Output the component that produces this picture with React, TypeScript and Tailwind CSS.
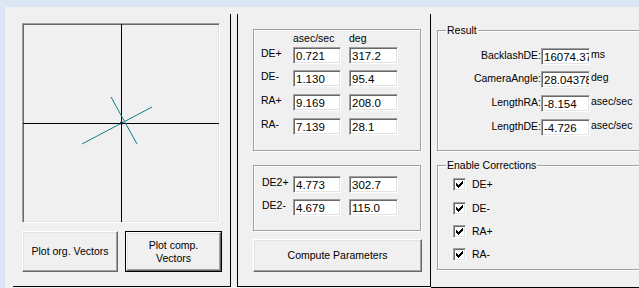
import React from "react";

const font = "font-['Liberation_Sans',Arial,sans-serif] text-[10.5px] text-black";

const sunken =
  "border border-t-[#a0a0a0] border-l-[#a0a0a0] border-b-white border-r-white shadow-[inset_1px_1px_0_#696969,inset_-1px_-1px_0_#e3e3e3]";

const raised =
  "border border-t-white border-l-white border-b-[#696969] border-r-[#696969] shadow-[inset_-1px_-1px_0_#a0a0a0,inset_1px_1px_0_#e3e3e3]";

const Field = ({ value, className }: { value: string; className: string }) => (
  <div className={`${className} h-[17px] bg-white ${sunken} overflow-hidden whitespace-nowrap pl-[2px] pt-[1px] text-[11.5px] leading-[14px]`}>
    {value}
  </div>
);

const checkPixels = [
  "......x",
  ".....xx",
  "x...xxx",
  "xx.xxx.",
  "xxxxx..",
  ".xxx...",
  "..x....",
];

const CheckBox = ({ label, className }: { label: string; className: string }) => (
  <div className={`flex items-center ${className}`}>
    <div className={`w-[13px] h-[13px] bg-white ${sunken} flex items-center justify-center`}>
      <svg width="7" height="7" viewBox="0 0 7 7" shapeRendering="crispEdges">
        {checkPixels.map((row, y) =>
          row.split("").map((c, x) => (c === "x" ? <rect key={`${x}-${y}`} x={x} y={y} width="1" height="1" fill="#000" /> : null))
        )}
      </svg>
    </div>
    <span className="ml-[6px] leading-[13px]">{label}</span>
  </div>
);

const GroupBox = ({ title, className, children }: { title?: string; className: string; children: React.ReactNode }) => (
  <div className={`relative border border-[#a0a0a0] shadow-[1px_1px_0_#fff,inset_1px_1px_0_#fff] ${className}`}>
    {title && (
      <span className="absolute left-[8px] top-[-7px] px-[1px] bg-[#f0f0f0] leading-[13px]">{title}</span>
    )}
    {children}
  </div>
);

const vecRows = [
  { label: "DE+", a: "0.721", d: "317.2", mt: "mt-[2px]" },
  { label: "DE-", a: "1.130", d: "95.4", mt: "mt-[6px]" },
  { label: "RA+", a: "9.169", d: "208.0", mt: "mt-[7px]" },
  { label: "RA-", a: "7.139", d: "28.1", mt: "mt-[7px]" },
];

const resultRows = [
  { label: "BacklashDE:", v: "16074.37", u: "ms", mt: "mt-[17px]" },
  { label: "CameraAngle:", v: "28.04378", u: "deg", mt: "mt-[6px]" },
  { label: "LengthRA:", v: "-8.154", u: "asec/sec", mt: "mt-[7px]" },
  { label: "LengthDE:", v: "-4.726", u: "asec/sec", mt: "mt-[7px]" },
];

export default function App() {
  return (
    <div className={`w-[639px] h-[288px] overflow-hidden bg-[#dbe6f4] pt-[7px] pl-[5px] flex ${font}`}>
      <div className="flex-1 bg-[#f0f0f0] pt-[7px] pl-[8px] flex items-start">
        {/* left panel: plot */}
        <div className="w-[218px] h-[273px] shrink-0 border-r border-b border-black pl-[9px] pt-[9px] flex flex-col">
          <div className={`w-[198px] h-[200px] ${sunken} bg-[#f0f0f0]`}>
            <svg width="196" height="198" viewBox="1 1 196 198" className="block">
              <line x1="0" y1="100.5" x2="198" y2="100.5" stroke="#000" strokeWidth="1" />
              <line x1="99.5" y1="0" x2="99.5" y2="200" stroke="#000" strokeWidth="1" />
              <line x1="89" y1="74" x2="115" y2="121" stroke="#0f7f80" strokeWidth="1" />
              <line x1="60" y1="121" x2="130" y2="84" stroke="#0f7f80" strokeWidth="1" />
              <circle cx="99.5" cy="100" r="1.6" fill="#101850" />
            </svg>
          </div>
          <div className="flex gap-[7px] mt-[8px]">
            <button className={`w-[96px] h-[41px] bg-[#f0f0f0] ${raised} leading-[13px]`}>Plot org. Vectors</button>
            <button className="w-[97px] h-[41px] bg-[#f0f0f0] border border-black leading-[13px] p-0">
              <div className={`w-full h-full ${raised} flex items-center justify-center`}>
                Plot comp.<br />Vectors
              </div>
            </button>
          </div>
        </div>

        {/* middle panel: vectors */}
        <div className="ml-[6px] w-[194px] h-[273px] shrink-0 border-l border-r border-b border-black pl-[15px] pt-[15px] flex flex-col">
          <GroupBox className="w-[168px] h-[122px] flex flex-col pt-[1px]">
            <div className="flex h-[14px] leading-[14px]">
              <span className="ml-[39px] w-[56px]">asec/sec</span>
              <span>deg</span>
            </div>
            {vecRows.map((r) => (
              <div key={r.label} className={`flex items-start ${r.mt}`}>
                <span className="ml-[7px] w-[32px] leading-[13px]">{r.label}</span>
                <Field value={r.a} className="w-[48px]" />
                <Field value={r.d} className="w-[49px] ml-[8px]" />
              </div>
            ))}
          </GroupBox>

          <GroupBox className="w-[168px] h-[66px] mt-[14px] flex flex-col pt-[10px]">
            {[
              { label: "DE2+", a: "4.773", d: "302.7", mt: "" },
              { label: "DE2-", a: "4.679", d: "115.0", mt: "mt-[6px]" },
            ].map((r) => (
              <div key={r.label} className={`flex items-start ${r.mt}`}>
                <span className="ml-[8px] w-[31px] leading-[13px]">{r.label}</span>
                <Field value={r.a} className="w-[48px]" />
                <Field value={r.d} className="w-[49px] ml-[8px]" />
              </div>
            ))}
          </GroupBox>

          <button className={`mt-[8px] w-[169px] h-[33px] bg-[#f0f0f0] ${raised}`}>Compute Parameters</button>
        </div>

        {/* right panel: results */}
        <div className="w-[220px] h-[274px] shrink-0 border-b border-black pl-[6px] pt-[16px] flex flex-col">
          <GroupBox title="Result" className="w-[215px] h-[121px] flex flex-col">
            {resultRows.map((r) => (
              <div key={r.label} className={`flex items-start ${r.mt}`}>
                <span className="w-[103px] text-right leading-[15px] whitespace-nowrap">{r.label}</span>
                <Field value={r.v} className="w-[49px]" />
                <span className="ml-[1px] leading-[13px]">{r.u}</span>
              </div>
            ))}
          </GroupBox>

          <GroupBox title="Enable Corrections" className="w-[215px] h-[105px] mt-[14px] flex flex-col pl-[15px] pt-[12px]">
            <CheckBox label="DE+" className="" />
            <CheckBox label="DE-" className="mt-[11px]" />
            <CheckBox label="RA+" className="mt-[10px]" />
            <CheckBox label="RA-" className="mt-[10px]" />
          </GroupBox>
        </div>
      </div>
    </div>
  );
}
